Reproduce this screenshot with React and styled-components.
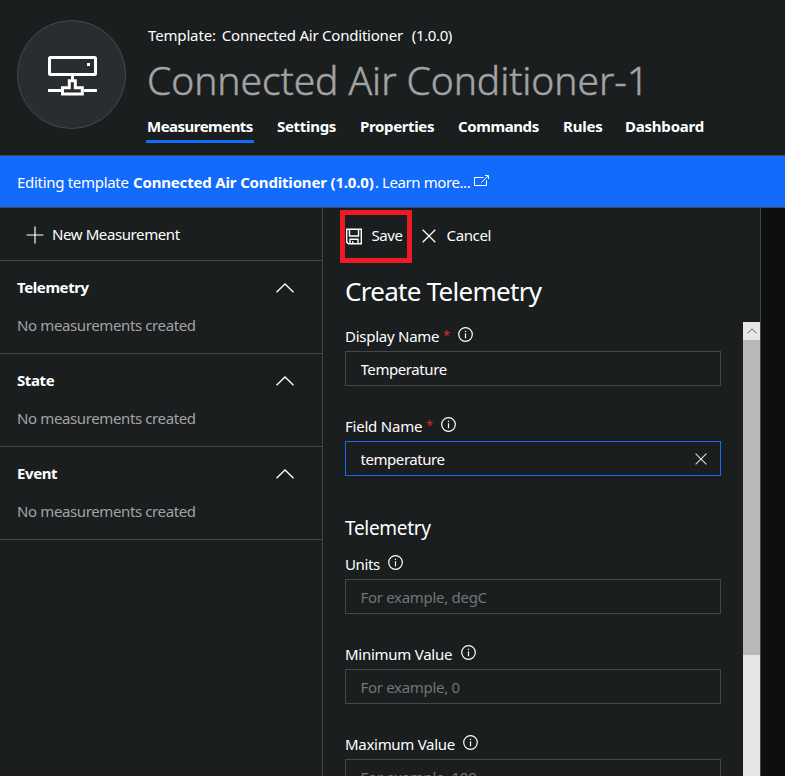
import React from "react";
import styled, { createGlobalStyle } from "styled-components";

const c = {
  bg: "#1a1e1f",
  line: "#454647",
  blue: "#136bfb",
  muted: "#a3a3a3",
  text: "#ffffff",
};

const GlobalStyle = createGlobalStyle`
  * { box-sizing: border-box; }
  body {
    margin: 0;
    background: #fff;
    color: ${c.text};
    font-family: "Noto Sans", "Open Sans", sans-serif;
    font-size: 15px;
    line-height: 20px;
    overflow: hidden;
  }
`;

const Page = styled.div`
  width: 785px;
  height: 776px;
  display: flex;
  flex-direction: column;
  background: ${c.bg};
  overflow: hidden;
`;

const Label = styled.span`
  white-space: nowrap;
  letter-spacing: ${(p) => p.$track || 0}px;
`;

const Header = styled.header`
  display: flex;
  flex: none;
  height: 156px;
  padding: 20px 0 0 17px;
  border-bottom: 1px solid ${c.line};
`;

const Avatar = styled.div`
  width: 109px;
  height: 109px;
  flex: none;
  border-radius: 50%;
  border: 1px solid #47494a;
  background: #292d2f;
  svg { display: block; margin: 32px 0 0 28px; }
`;

const HeaderText = styled.div`
  display: flex;
  flex-direction: column;
  padding: 5px 0 0 20px;
`;

const TemplateLine = styled.div`
  display: flex;
  height: 20px;
  padding-left: 2px;
`;

const TemplateName = styled(Label)`
  width: 190px;
  margin-left: 6px;
`;

const Title = styled.h1`
  margin: 9px 0 0 1px;
  height: 53px;
  line-height: 52px;
  font-size: 39px;
  font-weight: 300;
  -webkit-text-stroke: 0.5px ${c.muted};
  color: ${c.muted};
  white-space: nowrap;
  letter-spacing: -0.07px;
`;

const Tabs = styled.nav`
  display: flex;
  height: 34px;
  margin-top: 5px;
`;

const Tab = styled.a`
  width: ${(p) => p.$width}px;
  height: 31px;
  margin-right: ${(p) => p.$gap}px;
  padding: 4px 0 0 1px;
  font-weight: 700;
  letter-spacing: ${(p) => p.$track}px;
  white-space: nowrap;
  border-bottom: 3px solid ${(p) => (p.$active ? c.blue : "transparent")};
`;

const Banner = styled.div`
  display: flex;
  flex: none;
  align-items: center;
  height: 51px;
  padding: 1px 0 0 17px;
  background: ${c.blue};
  svg { margin: -3px 0 0 4px; }
`;

const BannerName = styled(Label)`
  width: 242px;
  margin-left: 4px;
  font-weight: 700;
`;

const BannerLead = styled(Label)`
  width: 112px;
`;

const Body = styled.div`
  display: flex;
  flex: 1;
  min-height: 0;
  border-top: 1px solid ${c.line};
`;

const Sidebar = styled.aside`
  width: 323px;
  flex: none;
  border-right: 1px solid ${c.line};
`;

const NewButton = styled.div`
  display: flex;
  align-items: center;
  height: 53px;
  padding: 0 0 0 26px;
  gap: 8px;
  border-bottom: 1px solid ${c.line};
  svg { margin-top: 2px; }
`;

const Section = styled.section`
  height: 93px;
  padding: 16px 28px 0 17px;
  border-bottom: 1px solid ${c.line};
`;

const SectionHead = styled.div`
  display: flex;
  justify-content: space-between;
  align-items: center;
  height: 20px;
  font-weight: 700;
  svg { margin-top: 2px; }
`;

const Empty = styled.div`
  margin-top: 18px;
  color: ${c.muted};
`;

const Panel = styled.main`
  display: flex;
  flex-direction: column;
  width: 438px;
  flex: none;
  border-right: 1px solid ${c.line};
`;

const Gutter = styled.div`
  flex: 1;
  background: #0d0e10;
`;

const Toolbar = styled.div`
  display: flex;
  height: 55px;
  padding: 2px 0 0 17px;
  span { padding-bottom: 4px; }
`;

const SaveButton = styled.div`
  display: flex;
  align-items: center;
  width: 72px;
  height: 53px;
  border: 5px solid #ed1c24;
  gap: 9.500px;
  svg { margin-top: -1px; }
`;

const CancelButton = styled.div`
  display: flex;
  align-items: center;
  height: 53px;
  padding-left: 10px;
  gap: 10.500px;
  svg { margin-top: -2px; }
`;

const PanelTitle = styled.h2`
  margin: 10px 0 0 22px;
  height: 49px;
  line-height: 36px;
  font-size: 26px;
  font-weight: 400;
  white-space: nowrap;
  letter-spacing: -0.72px;
`;

const Scroll = styled.div`
  display: flex;
  flex: 1;
  min-height: 0;
  overflow: hidden;
`;

const Form = styled.form`
  width: 420px;
  padding: 4px 0 0 22px;
`;

const FieldBlock = styled.div`
  width: 376px;
  height: 90px;
`;

const FieldLabel = styled.label`
  display: flex;
  align-items: flex-start;
  height: 25px;
  svg { margin: 1px 0 0 8.500px; }
`;

const Required = styled.span`
  width: 6px;
  margin: 0 0 0 4px;
  font-size: 12px;
  line-height: 19px;
  color: #e8262d;
`;

const InputBox = styled.div`
  display: flex;
  align-items: center;
  height: 35px;
  padding: 1px 13px 0 14.500px;
  border: 1px solid ${(p) => (p.$focused ? c.blue : c.line)};
`;

const Input = styled.input`
  flex: 1;
  min-width: 0;
  height: 24px;
  padding: 0;
  border: 0;
  outline: 0;
  background: transparent;
  color: ${c.text};
  font: inherit;
  letter-spacing: ${(p) => p.$track}px;
  &::placeholder { color: #737576; opacity: 1; }
`;

const GroupTitle = styled.h3`
  margin: 8px 0 12px;
  height: 28px;
  line-height: 28px;
  font-size: 19px;
  font-weight: 400;
  letter-spacing: -0.32px;
`;

const Scrollbar = styled.div`
  width: 17px;
  background: #e6e6e6;
`;

const ScrollUp = styled.div`
  display: flex;
  justify-content: center;
  height: 18px;
  padding-top: 6px;
`;

const Thumb = styled.div`
  height: 315px;
  background: #b9b9b9;
`;

const DeviceIcon = () => (
  <svg width="51" height="44" viewBox="0 0 51 44" fill="none" stroke="#fff">
    <rect x="3.5" y="4.5" width="46" height="17" rx="1" strokeWidth="3" />
    <rect x="41" y="10" width="3" height="3" fill="#fff" stroke="none" />
    <path d="M26.5 22v5M2 37.5h13M38 37.5h13" strokeWidth="3" />
    <path d="M23.300 34.700v-7h6v7h7v6.200h-19.800v-6.200z" strokeWidth="3" />
  </svg>
);

const PlusIcon = () => (
  <svg width="18" height="18" viewBox="0 0 18 18" fill="none" stroke="#fff" strokeWidth="1.2">
    <path d="M9 .5v17M.5 9h17" />
  </svg>
);

const ChevronUp = () => (
  <svg width="18" height="10" viewBox="0 0 18 10" fill="none" stroke="#fff" strokeWidth="1.3">
    <path d="M.5 9.2 9 1l8.500 8.200" />
  </svg>
);

const SaveIcon = () => (
  <svg width="17" height="17" viewBox="0 0 17 17" fill="none" stroke="#fff" strokeWidth="1.400">
    <path d="M1.700 1.200h14.600v14.600H3.400l-1.700-1.700z" />
    <path d="M4.500 1.200v6.800h9V1.200M5 15.800v-4.600h8v4.600M7.700 15.800v-2.600" />
  </svg>
);

const Cross = ({ size, color = "#fff" }) => (
  <svg width={size} height={size} viewBox="0 0 14 14" fill="none" stroke={color} strokeWidth="1.300">
    <path d="m.7.7 12.600 12.600M13.300.7.7 13.300" />
  </svg>
);

const InfoIcon = () => (
  <svg width="15" height="15" viewBox="0 0 15 15" fill="none" stroke="#fff" strokeWidth="1.200">
    <circle cx="7.500" cy="7.500" r="6.800" />
    <path d="M7.500 6.300v5M7.500 3.800v1.300" />
  </svg>
);

const ExternalIcon = () => (
  <svg width="15" height="12" viewBox="0 0 15 12" fill="none" stroke="#fff">
    <path d="M9.500 2.500h-9v8h12v-5M7.500 7.500l6.500-6.500M11 .5h3.500v3.500" />
  </svg>
);

const tabs = [
  { name: "Measurements", width: 108, gap: 22, track: -0.52, active: true },
  { name: "Settings", width: 61, gap: 22, track: -0.3 },
  { name: "Properties", width: 76, gap: 22, track: -0.36 },
  { name: "Commands", width: 83, gap: 22, track: -0.4 },
  { name: "Rules", width: 40, gap: 22, track: -0.2 },
  { name: "Dashboard", width: 81, gap: 0, track: -0.22 },
];

const sections = [
  { name: "Telemetry", track: -0.4 },
  { name: "State", track: -0.4 },
  { name: "Event", track: -0.4 },
];

function Field({ label, track, required, value, placeholder, valueTrack, focused }) {
  return (
    <FieldBlock>
      <FieldLabel>
        <Label $track={track}>{label}</Label>
        {required && <Required>*</Required>}
        <InfoIcon />
      </FieldLabel>
      <InputBox $focused={focused}>
        <Input defaultValue={value} placeholder={placeholder} $track={valueTrack} />
        {focused && <Cross size={12} color="#dcdcdc" />}
      </InputBox>
    </FieldBlock>
  );
}

export default function App() {
  return (
    <>
      <GlobalStyle />
      <Page>
        <Header>
          <Avatar><DeviceIcon /></Avatar>
          <HeaderText>
            <TemplateLine>
              <Label $track={-0.15}>Template:</Label>
              <TemplateName $track={-0.22}>Connected Air Conditioner</TemplateName>
              <Label $track={-0.38}>(1.0.0)</Label>
            </TemplateLine>
            <Title>Connected Air Conditioner-1</Title>
            <Tabs>
              {tabs.map((t) => (
                <Tab key={t.name} $width={t.width} $gap={t.gap} $track={t.track} $active={t.active}>
                  {t.name}
                </Tab>
              ))}
            </Tabs>
          </HeaderText>
        </Header>
        <Banner>
          <BannerLead $track={-0.3}>Editing template</BannerLead>
          <BannerName $track={-0.17}>Connected Air Conditioner (1.0.0)</BannerName>
          <Label $track={-0.42}>. Learn more...</Label>
          <ExternalIcon />
        </Banner>
        <Body>
          <Sidebar>
            <NewButton>
              <PlusIcon />
              <Label $track={-0.4}>New Measurement</Label>
            </NewButton>
            {sections.map((s) => (
              <Section key={s.name}>
                <SectionHead>
                  <Label $track={s.track}>{s.name}</Label>
                  <ChevronUp />
                </SectionHead>
                <Empty><Label $track={-0.38}>No measurements created</Label></Empty>
              </Section>
            ))}
          </Sidebar>
          <Panel>
            <Toolbar>
              <SaveButton>
                <SaveIcon />
                <Label $track={-0.4}>Save</Label>
              </SaveButton>
              <CancelButton>
                <Cross size={14} />
                <Label $track={-0.35}>Cancel</Label>
              </CancelButton>
            </Toolbar>
            <PanelTitle>Create Telemetry</PanelTitle>
            <Scroll>
              <Form>
                <Field label="Display Name" track={-0.26} required value="Temperature" valueTrack={-0.42} />
                <Field label="Field Name" track={-0.22} required value="temperature" valueTrack={-0.44} focused />
                <GroupTitle>Telemetry</GroupTitle>
                <Field label="Units" track={-0.35} placeholder="For example, degC" valueTrack={-0.3} />
                <Field label="Minimum Value" track={-0.26} placeholder="For example, 0" valueTrack={-0.3} />
                <Field label="Maximum Value" track={-0.3} placeholder="For example, 100" valueTrack={-0.3} />
              </Form>
              <Scrollbar>
                <ScrollUp>
                  <svg width="10" height="6" viewBox="0 0 10 6" fill="none" stroke="#606060">
                    <path d="M.5 5.300 5 .800l4.500 4.500" />
                  </svg>
                </ScrollUp>
                <Thumb />
              </Scrollbar>
            </Scroll>
          </Panel>
          <Gutter />
        </Body>
      </Page>
    </>
  );
}
